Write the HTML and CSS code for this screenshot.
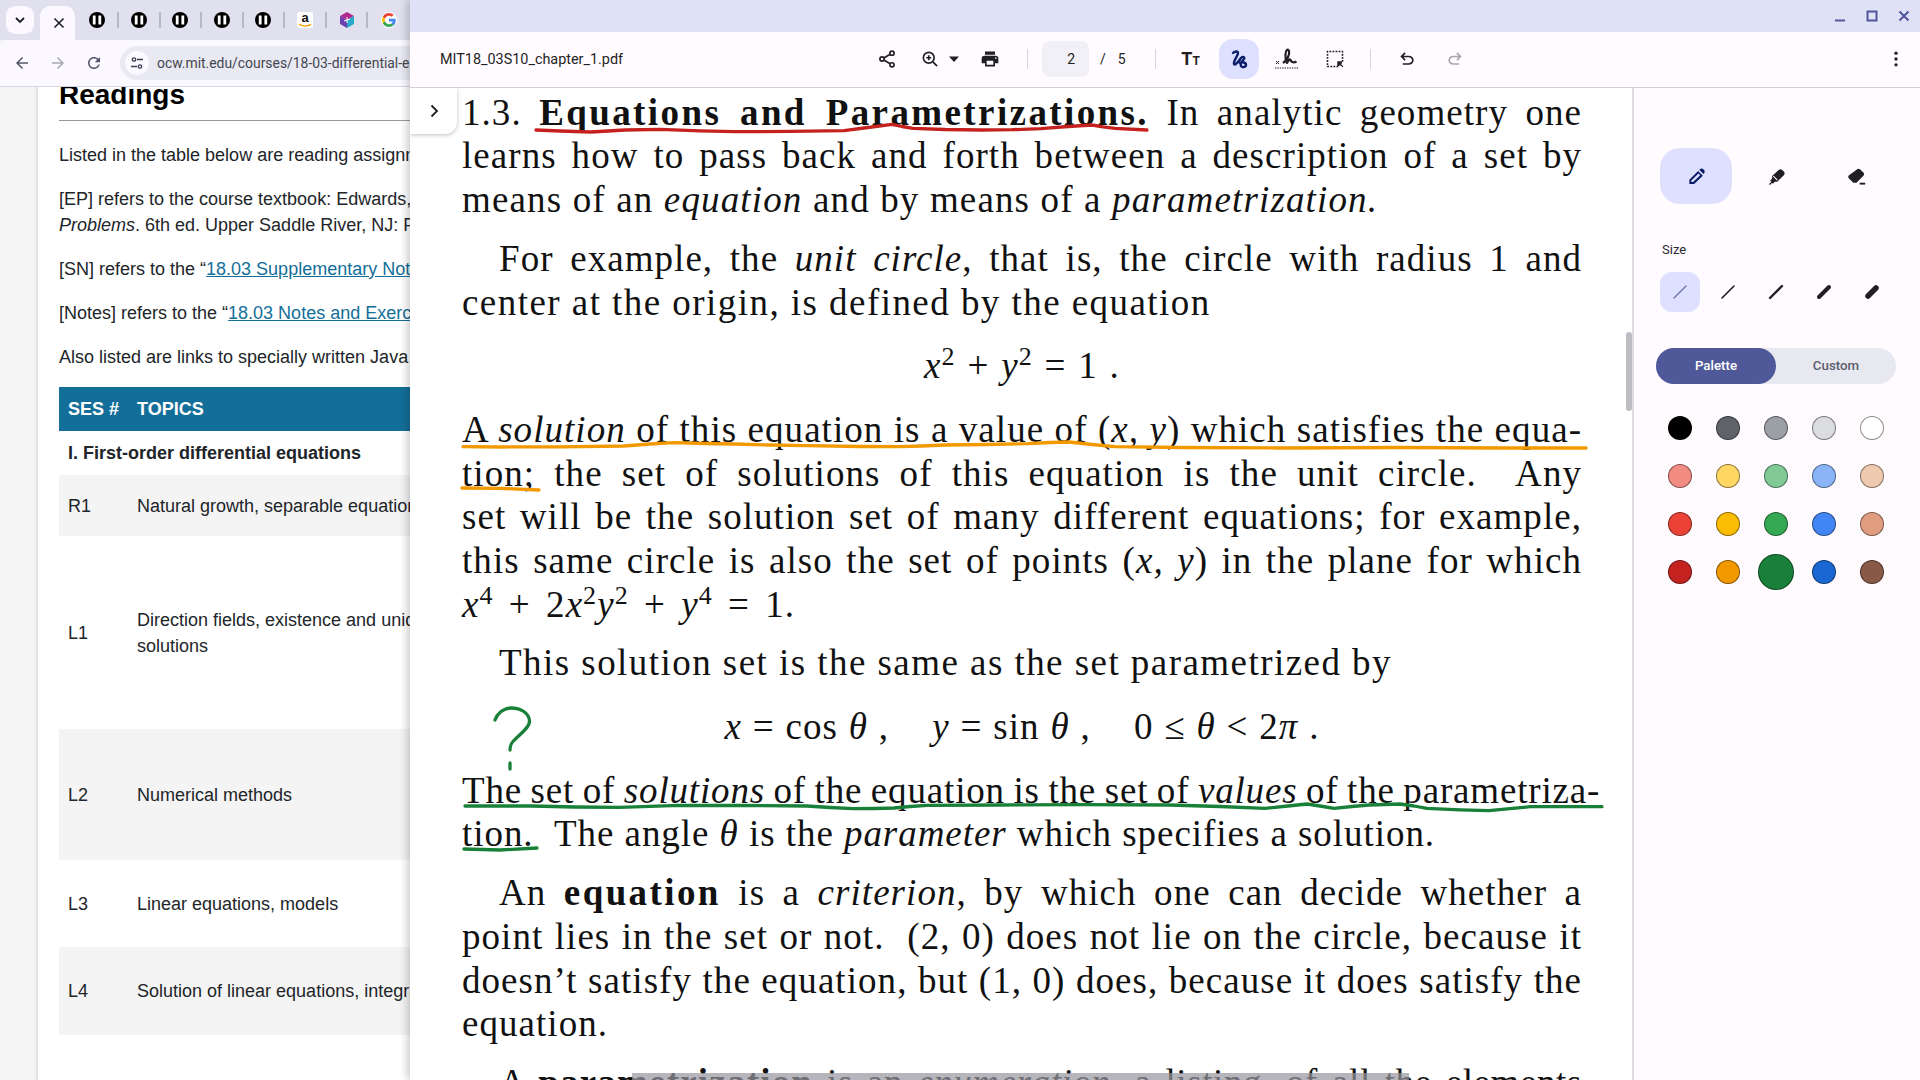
FILE: index.html
```html
<!DOCTYPE html>
<html lang="en">
  <head>
    <meta charset="UTF-8" />
    <title>MIT18_03S10_chapter_1.pdf</title>
    <link rel="stylesheet" href="styles.css">
  </head>
  <body>
    <div class="desktop">
      <!-- Browser window behind the PDF viewer -->
      <div class="browser">
        <div class="tabstrip">
          <div class="tab-search"><svg width="14" height="14" viewBox="0 0 14 14"><path d="M3 5l4 4 4-4" fill="none" stroke="#1f1f2a" stroke-width="1.8"/></svg></div>
          <div class="tab-active"><svg width="12" height="12" viewBox="0 0 12 12"><path d="M1.5 1.5l9 9M10.5 1.5l-9 9" stroke="#1f1f2a" stroke-width="1.6"/></svg></div>
          <div class="pinned"><svg class="ocw" viewBox="0 0 16 16"><circle cx="8" cy="8" r="8" fill="#000"/><path d="M5.200 3.500v9M10.800 3.500v9" stroke="#fff" stroke-width="2.800"/></svg></div>
          <div class="pinned"><svg class="ocw" viewBox="0 0 16 16"><circle cx="8" cy="8" r="8" fill="#000"/><path d="M5.200 3.500v9M10.800 3.500v9" stroke="#fff" stroke-width="2.800"/></svg></div>
          <div class="pinned"><svg class="ocw" viewBox="0 0 16 16"><circle cx="8" cy="8" r="8" fill="#000"/><path d="M5.200 3.500v9M10.800 3.500v9" stroke="#fff" stroke-width="2.800"/></svg></div>
          <div class="pinned"><svg class="ocw" viewBox="0 0 16 16"><circle cx="8" cy="8" r="8" fill="#000"/><path d="M5.200 3.500v9M10.800 3.500v9" stroke="#fff" stroke-width="2.800"/></svg></div>
          <div class="pinned"><svg class="ocw" viewBox="0 0 16 16"><circle cx="8" cy="8" r="8" fill="#000"/><path d="M5.200 3.500v9M10.800 3.500v9" stroke="#fff" stroke-width="2.800"/></svg></div>
          <div class="pinned"><span class="amazon">a<svg width="14" height="5" viewBox="0 0 14 5"><path d="M1 1c3 2.6 8 2.6 12 .4" fill="none" stroke="#f90" stroke-width="1.5"/></svg></span></div>
          <div class="pinned"><svg width="16" height="16" viewBox="0 0 16 16"><path d="M8 0l7 4-7 4-7-4z" fill="#b0278f"/><path d="M1 4l7 4v8l-7-4z" fill="#6a3fb0"/><path d="M15 4l-7 4v8l7-4z" fill="#2aa7c9"/><path d="M8 5v6M5 9l6-2" stroke="#fff" stroke-width="1"/></svg></div>
          <div class="pinned last"><span class="g-wrap"><svg width="14" height="14" viewBox="0 0 48 48"><path fill="#EA4335" d="M24 9.500c3.500 0 6.700 1.200 9.200 3.600l6.900-6.900C35.900 2.400 30.500 0 24 0 14.600 0 6.500 5.400 2.600 13.200l8 6.200C12.500 13.700 17.800 9.500 24 9.500z"/><path fill="#4285F4" d="M47 24.500c0-1.600-.2-3.100-.4-4.500H24v9h12.900c-.6 3-2.200 5.500-4.800 7.200l7.700 6c4.500-4.200 7.200-10.300 7.200-17.700z"/><path fill="#FBBC05" d="M10.500 28.600c-.5-1.400-.8-3-.8-4.600s.3-3.200.8-4.600l-8-6.200C.9 16.500 0 20.100 0 24s.9 7.500 2.600 10.800l7.900-6.200z"/><path fill="#34A853" d="M24 48c6.500 0 11.900-2.100 15.900-5.800l-7.700-6c-2.100 1.400-4.900 2.300-8.200 2.300-6.200 0-11.500-4.200-13.500-9.900l-7.900 6.200C6.500 42.600 14.600 48 24 48z"/></svg></span></div>
        </div>
        <div class="addressbar">
          <svg class="nav-icon" viewBox="0 0 24 24"><path fill="#53566a" d="M20 11H7.830l5.590-5.590L12 4l-8 8 8 8 1.410-1.410L7.830 13H20v-2z"/></svg>
          <svg class="nav-icon" viewBox="0 0 24 24"><path fill="#a9a9b6" d="M4 11h12.170l-5.590-5.590L12 4l8 8-8 8-1.410-1.410L16.170 13H4v-2z"/></svg>
          <svg class="nav-icon" viewBox="0 0 24 24"><path fill="#53566a" d="M17.650 6.350C16.200 4.900 14.210 4 12 4c-4.420 0-7.990 3.580-7.990 8s3.570 8 7.990 8c3.730 0 6.840-2.550 7.730-6h-2.080c-.82 2.330-3.040 4-5.650 4-3.310 0-6-2.690-6-6s2.690-6 6-6c1.660 0 3.140.69 4.220 1.780L13 11h7V4l-2.350 2.350z"/></svg>
          <div class="omnibox">
            <span class="site-info"><svg width="14" height="14" viewBox="0 0 14 14"><g fill="none" stroke="#3c3f50" stroke-width="1.300"><circle cx="4" cy="3.500" r="1.700"/><path d="M7 3.500h6M1 10.500h6"/><circle cx="10" cy="10.500" r="1.700"/></g></svg></span>
            <span class="url">ocw.mit.edu/courses/18-03-differential-equations-spring-2010</span>
          </div>
        </div>
        <div class="site">
          <div class="site-card">
            <h1>Readings</h1>
            <p>Listed in the table below are reading assignments for each session.</p>
            <p>[EP] refers to the course textbook: Edwards, C., and D. Penney.<br><em>Problems</em>. 6th ed. Upper Saddle River, NJ: Prentice Hall</p>
            <p>[SN] refers to the “<a href="#">18.03 Supplementary Notes</a>”</p>
            <p>[Notes] refers to the “<a href="#">18.03 Notes and Exercises</a>”</p>
            <p>Also listed are links to specially written Java applets</p>
            <table>
              <thead>
                <tr><th class="ses">SES #</th><th>TOPICS</th></tr>
              </thead>
              <tbody>
                <tr class="group"><td colspan="2">I. First-order differential equations</td></tr>
                <tr class="shade r-61"><td>R1</td><td>Natural growth, separable equations</td></tr>
                <tr class="r-193"><td>L1</td><td>Direction fields, existence and uniqueness of<br>solutions</td></tr>
                <tr class="shade r-131"><td>L2</td><td>Numerical methods</td></tr>
                <tr class="r-87"><td>L3</td><td>Linear equations, models</td></tr>
                <tr class="shade r-88"><td>L4</td><td>Solution of linear equations, integrating factors</td></tr>
              </tbody>
            </table>
          </div>
        </div>
      </div>

      <!-- PDF viewer window -->
      <div class="viewer">
        <div class="titlebar">
          <span class="win-btn"><svg width="12" height="12" viewBox="0 0 12 12"><path d="M1 10.500h10" stroke="#4f5898" stroke-width="2"/></svg></span>
          <span class="win-btn"><svg width="12" height="12" viewBox="0 0 12 12"><rect x="1.500" y="1.500" width="9" height="9" fill="none" stroke="#4f5898" stroke-width="2"/></svg></span>
          <span class="win-btn"><svg width="12" height="12" viewBox="0 0 12 12"><path d="M1.500 1.500l9 9M10.500 1.500l-9 9" stroke="#4f5898" stroke-width="2"/></svg></span>
        </div>
        <div class="toolbar">
          <div class="filename">MIT18_03S10_chapter_1.pdf</div>
          <button class="tool"><svg viewBox="0 0 24 24"><g fill="none" stroke="#1f1f24" stroke-width="2"><circle cx="18" cy="5" r="2.500"/><circle cx="6" cy="12" r="2.500"/><circle cx="18" cy="19" r="2.500"/><path d="M8.200 10.800l7.600-4.500M8.200 13.200l7.600 4.500"/></g></svg></button>
          <button class="tool zoom-tool"><svg viewBox="0 0 24 24"><g fill="none" stroke="#1f1f24" stroke-width="2"><circle cx="10.500" cy="10.500" r="6.500"/><path d="M15.500 15.500l5 5M10.500 7.500v6M7.500 10.500h6"/></g></svg><svg class="caret" viewBox="0 0 12 12"><path d="M1 3.500h10l-5 5.500z" fill="#1f1f24"/></svg></button>
          <button class="tool"><svg viewBox="0 0 24 24"><path fill="#1f1f24" d="M19 8H5c-1.660 0-3 1.340-3 3v6h4v4h12v-4h4v-6c0-1.660-1.340-3-3-3zm-3 11H8v-5h8v5zm3-7c-.55 0-1-.45-1-1s.45-1 1-1 1 .45 1 1-.45 1-1 1zm-1-9H6v4h12V3z"/></svg></button>
          <span class="sep"></span>
          <div class="page-box">2</div>
          <span class="page-slash">/</span>
          <span class="page-total">5</span>
          <span class="sep"></span>
          <button class="tool tt"><span class="tt-big">T</span><span class="tt-small">T</span></button>
          <button class="tool tool-on"><svg class="ink-icon" viewBox="0 0 24 24"><path d="M6 6c2-2 5-2 5 0 0 3-5 8-4 11 1 2 5-3 7-6 2-2 4-1 3 1-2 2-4 5-3 7 1 2 5 1 5-1 0-3-4-3-6-2" fill="none" stroke="#0c1c6a" stroke-width="2.400" stroke-linecap="round" stroke-linejoin="round"/></svg></button>
          <button class="tool"><svg class="sign-icon" viewBox="0 0 24 24"><path d="M8 16c4-3 7-8 6-12-1-3-3.500-1-3.500 3.500 0 4 0 8.500 1.500 8.500 2-3.500 2.500-4.500 3.500-3 1 2.500 3.500 3 6 1.500" fill="none" stroke="#1f1f24" stroke-width="2.200"/><path d="M1 14l3 3M4 14l-3 3" stroke="#1f1f24"/><path d="M0 21h24" stroke="#1f1f24" stroke-width="1.200" stroke-dasharray="1.400 1"/></svg></button>
          <button class="tool select-tool"><svg viewBox="0 0 24 24"><path d="M16 21H3V3h18v13" fill="none" stroke="#1f1f24" stroke-width="1.900" stroke-dasharray="2.200 1.500"/><path d="M21.500 21.500l-3.500-3.500M15.500 15.500h4v1.500h-2.500v2.500h-1.500z" stroke="#1f1f24" stroke-width="1.500"/></svg></button>
          <span class="sep sep-tight"></span>
          <button class="tool"><svg viewBox="0 0 24 24"><path fill="#1f1f24" d="M7 19v-2h7.100q1.575 0 2.738-1T18 13.500q0-1.500-1.163-2.500T14.100 10H7.800l2.600 2.600L9 14 4 9l5-5 1.400 1.400L7.800 8h6.300q2.425 0 4.163 1.575T20 13.500q0 2.350-1.737 3.925T14.100 19H7z"/></svg></button>
          <button class="tool"><svg viewBox="0 0 24 24"><path fill="#a8a8ac" transform="matrix(-1 0 0 1 24 0)" d="M7 19v-2h7.100q1.575 0 2.738-1T18 13.500q0-1.500-1.163-2.500T14.100 10H7.800l2.600 2.600L9 14 4 9l5-5 1.400 1.400L7.800 8h6.300q2.425 0 4.163 1.575T20 13.500q0 2.350-1.737 3.925T14.100 19H7z"/></svg></button>
          <button class="tool more"><svg viewBox="0 0 24 24"><g fill="#1f1f24"><circle cx="12" cy="5" r="2"/><circle cx="12" cy="12" r="2"/><circle cx="12" cy="19" r="2"/></g></svg></button>
        </div>
        <div class="doc">
          <div class="doc-view">
            <div class="line"><span>1.3.</span> <b>Equations and Parametrizations.</b> In analytic geometry one</div>
            <div class="line">learns how to pass back and forth between a description of a set by</div>
            <div class="line open ls-mid">means of an <i>equation</i> and by means of a <i>parametrization.</i></div>
            <div class="line indent gap-15">For example, the <i>unit circle</i>, that is, the circle with radius 1 and</div>
            <div class="line open ls-wide">center at the origin, is defined by the equation</div>
            <div class="line formula gap-20 formula-1"><i>x</i><sup>2</sup> + <i>y</i><sup>2</sup> = 1 .</div>
            <div class="line gap-20"><span>A <i>solution</i> of this equation is a value of (<i>x, y</i>) which satisfies the equa-</span></div>
            <div class="line">tion; the set of solutions of this equation is the unit circle. &nbsp;Any</div>
            <div class="line">set will be the solution set of many different equations; for example,</div>
            <div class="line">this same circle is also the set of points (<i>x, y</i>) in the plane for which</div>
            <div class="line open math-line"><i>x</i><sup>4</sup> + 2<i>x</i><sup>2</sup><i>y</i><sup>2</sup> + <i>y</i><sup>4</sup> = 1.</div>
            <div class="line indent open gap-14 ls-wide">This solution set is the same as the set parametrized by</div>
            <div class="line formula gap-20 formula-2"><i>x</i> = cos <i>θ</i> , &nbsp; &nbsp;<i>y</i> = sin <i>θ</i> , &nbsp; &nbsp;0 ≤ <i>θ</i> &lt; 2<i>π</i> .</div>
            <div class="line gap-20 wide-line">The set of <i>solutions</i> of the equation is the set of <i>values</i> of the parametriza-</div>
            <div class="line open ls-tight">tion. &nbsp;The angle <i>θ</i> is the <i>parameter</i> which specifies a solution.</div>
            <div class="line indent gap-15">An <b>equation</b> is a <i>criterion</i>, by which one can decide whether a</div>
            <div class="line">point lies in the set or not. &nbsp;(2, 0) does not lie on the circle, because it</div>
            <div class="line">doesn’t satisfy the equation, but (1, 0) does, because it does satisfy the</div>
            <div class="line open">equation.</div>
            <div class="line indent gap-15 last-line">A <b>parametrization</b> is an <i>enumeration</i>, a listing, of all the elements</div>
          </div>
          <div class="side-panel">
            <div class="pen-row">
              <button class="pen pen-on"><svg viewBox="0 0 24 24"><path fill="#0c1c6a" d="M3 21.500v-5.500L14 5l6 6-11 10.500zm2.500-4.500v2h2.200l9-8.600-2.200-2.200zM15.500 3.500l.8-.8c1.200-1.200 3-1.200 4.200 0l1 1c1.200 1.200 1.200 3 0 4.200l-.8.800z"/></svg></button>
              <button class="pen"><svg viewBox="0 0 24 24"><path fill="#1f1f24" d="M2 22l3.500-3.500-1.500-1.500 2.500-2.500v-3L15 3.500c1.300-1 2.800-1 4 0l2.500 2.500c1 1.200 1 2.700 0 4L13 18.500h-3L7.500 21 6 20l-1 2z"/><path d="M8 11.500l5 5" stroke="#fffbff" stroke-width="1.400"/></svg></button>
              <button class="pen"><svg viewBox="0 0 24 24"><path fill="#1f1f24" d="M12.500 3c1.200-1.200 3-1.200 4.200 0l4 4c1.200 1.200 1.200 3 0 4.200L12 20H8l-5.500-5.500c-1.200-1.200-1.200-3 0-4.200z"/><path d="M16 21h7" stroke="#1f1f24" stroke-width="2.400"/></svg></button>
            </div>
            <div class="size-label">Size</div>
            <div class="size-row">
              <span class="size size-on"><svg viewBox="0 0 16 16"><path d="M2 14L14 2" stroke="#6c70a4" stroke-width="1.200" stroke-linecap="round"/></svg></span>
              <span class="size"><svg viewBox="0 0 16 16"><path d="M2 14L14 2" stroke="#1f1f24" stroke-width="1.600" stroke-linecap="round"/></svg></span>
              <span class="size"><svg viewBox="0 0 16 16"><path d="M2 14L14 2" stroke="#1f1f24" stroke-width="2.400" stroke-linecap="round"/></svg></span>
              <span class="size"><svg viewBox="0 0 16 16"><path d="M3 13L13 3" stroke="#1f1f24" stroke-width="4" stroke-linecap="round"/></svg></span>
              <span class="size"><svg viewBox="0 0 16 16"><path d="M4 12L12 4" stroke="#1f1f24" stroke-width="5.500" stroke-linecap="round"/></svg></span>
            </div>
            <div class="segmented">
              <span class="seg seg-on">Palette</span>
              <span class="seg">Custom</span>
            </div>
            <div class="swatches">
              <span class="dot c-black"></span><span class="dot c-gr1"></span><span class="dot c-gr2"></span><span class="dot c-gr3"></span><span class="dot c-white"></span>
              <span class="dot c-red1"></span><span class="dot c-yel1"></span><span class="dot c-grn1"></span><span class="dot c-blu1"></span><span class="dot c-tan1"></span>
              <span class="dot c-red2"></span><span class="dot c-yel2"></span><span class="dot c-grn2"></span><span class="dot c-blu2"></span><span class="dot c-tan2"></span>
              <span class="dot c-red3"></span><span class="dot c-yel3"></span><span class="dot c-grn3 dot-picked"></span><span class="dot c-blu3"></span><span class="dot c-tan3"></span>
            </div>
          </div>
          <div class="vthumb"></div>
          <div class="hthumb"></div>
          <div class="side-toggle"><svg width="14" height="14" viewBox="0 0 14 14"><path d="M4.500 1.500L10 7l-5.500 5.500" fill="none" stroke="#1f1f24" stroke-width="1.800"/></svg></div>
        </div>
        <!-- Ink annotations, drawn in screen coordinates -->
        <svg class="ink" viewBox="410 0 1510 1080">
          <g fill="none" stroke-width="3.300" stroke-linecap="round" stroke-linejoin="round">
            <polyline stroke="#c5221f" points="536,130 560,131 591,132 625,130 660,129.300 700,130.800 734,131.700 790,131.400 844,130.700 868,127.500 892,124.300 902,126.500 913,128.300 945,129.500 982,130 1012,129.700 1041,128.700 1068,126.500 1092,125 1103,126.800 1115,128.300 1147,130"/>
            <polyline stroke="#f29900" points="463,446.700 500,447 560,446.800 624,446 650,444 674,442.700 705,443.500 734,444 770,445 807,445.700 860,446.500 899,446.700 922,446 945,445 985,444.500 1028,443.700 1050,442.500 1069,442 1092,444.500 1115,446.700 1180,447.500 1280,448 1400,447.500 1500,448 1586,448"/>
            <polyline stroke="#f29900" points="462,488 500,488.300 539,490"/>
            <polyline stroke="#188038" points="465,806 532,806 575,807 619,807.300 650,806.300 679,805.300 740,805.500 807,806 830,807.500 853,808.700 875,808.500 894,808 910,806.500 927,805.300 1000,805 1083,804.700 1169,805 1220,806.500 1265,808.300 1288,806 1307,804 1320,806 1334,808.300 1352,806.500 1369,805 1400,804 1414,806 1427,808.300 1460,809.800 1489,810.700 1510,808.700 1530,806.700 1566,806.700 1602,806.700"/>
            <polyline stroke="#188038" points="464,849 500,850 537,848"/>
            <path stroke="#188038" d="M495 720c2-6 8-12 16-12 10 0 18 5 18.500 13 .5 6-8 12-14 18-5 4-5.500 7-5.500 11"/>
            <path stroke="#188038" d="M510 763v6"/>
          </g>
        </svg>
      </div>
    </div>
  </body>
</html>
```

FILE: styles.css
```css
/* General */
body {
  margin: 0;
  font-family: "Liberation Sans", Arial, sans-serif;
  background: #000;
}

button {
  border: none;
  background: none;
  padding: 0;
}

.desktop {
  position: relative;
  width: 1920px;
  height: 1080px;
  overflow: hidden;
}

/* Browser window */
.browser {
  position: absolute;
  left: 0;
  top: 0;
  width: 410px;
  height: 1080px;
  overflow: hidden;
  display: flex;
  flex-direction: column;
  background: #f5f5f5;
}

.tabstrip {
  height: 40px;
  background: #e0e0ee;
  display: flex;
  flex-shrink: 0;
  padding-left: 6px;
  box-sizing: border-box;
}

.tab-search {
  width: 28px;
  height: 28px;
  margin-top: 6px;
  background: #fbf8ff;
  border-radius: 9px;
  display: flex;
  align-items: center;
  justify-content: center;
}

.tab-active {
  width: 36px;
  height: 34px;
  margin: 6px 2px 0 6px;
  padding-left: 2px;
  box-sizing: border-box;
  background: #fbf8ff;
  border-radius: 10px 10px 0 0;
  display: flex;
  align-items: center;
  justify-content: center;
}

.pinned {
  width: 42px;
  height: 16px;
  margin-top: 12px;
  display: flex;
  align-items: center;
  justify-content: center;
  border-right: 2px solid #b9b9c5;
  box-sizing: border-box;
}

.pinned.last {
  border-right: none;
}

.ocw {
  width: 16px;
  height: 16px;
}

.amazon {
  width: 16px;
  height: 16px;
  background: #fff;
  border-radius: 2px;
  font-size: 13px;
  font-weight: bold;
  line-height: 12px;
  text-align: center;
  color: #111;
  display: flex;
  flex-direction: column;
  align-items: center;
}

.amazon svg {
  margin-top: -1px;
}

.g-wrap {
  width: 16px;
  height: 16px;
  background: #fff;
  border-radius: 50%;
  display: flex;
  align-items: center;
  justify-content: center;
}

.addressbar {
  height: 47px;
  flex-shrink: 0;
  background: #fbf8ff;
  border-bottom: 1px solid #d6d6e0;
  box-sizing: border-box;
  border-radius: 8px 0 0 0;
  display: flex;
  align-items: center;
  padding-left: 13px;
  gap: 18px;
}

.nav-icon {
  width: 18px;
  height: 18px;
  flex-shrink: 0;
}

.omnibox {
  flex: 1;
  height: 34px;
  margin-left: -1px;
  background: #e9e9f3;
  border-radius: 17px 0 0 17px;
  display: flex;
  align-items: center;
  padding-left: 5px;
  overflow: hidden;
  white-space: nowrap;
}

.site-info {
  width: 24px;
  height: 24px;
  background: #fbf8ff;
  border-radius: 50%;
  display: flex;
  align-items: center;
  justify-content: center;
  flex-shrink: 0;
}

.url {
  font-family: Roboto, sans-serif;
  font-size: 13.900px;
  color: #44464f;
  margin-left: 8px;
}

.site {
  flex: 1;
  overflow: hidden;
  padding-left: 38px;
}

.site-card {
  background: #fff;
  height: 110%;
  padding-left: 21px;
  width: 1000px;
  box-shadow: 0 0 5px rgba(0, 0, 0, 0.2);
  color: #212529;
  font-size: 18px;
  line-height: 26px;
  white-space: nowrap;
}

.site-card h1 {
  margin: -10px 0 21px;
  font-size: 28px;
  line-height: 36px;
  color: #000;
  border-bottom: 1px solid #999;
  height: 43px;
  width: 900px;
}

.site-card p {
  margin: 18px 0 0;
}

.site-card a {
  color: #136f99;
}

.site-card table {
  margin-top: 17px;
  width: 900px;
  table-layout: fixed;
  border-collapse: collapse;
}

.site-card th,
.site-card td {
  padding: 0 0 0 9px;
  text-align: left;
}

.site-card th {
  background: #136f99;
  color: #fff;
  height: 44px;
  text-transform: uppercase;
}

.ses {
  width: 60px;
}

.group td {
  font-weight: bold;
  height: 44px;
}

.shade {
  background: #f4f4f4;
}

.r-61 {
  height: 61px;
}

.r-193 {
  height: 193px;
}

.r-131 {
  height: 131px;
}

.r-87 {
  height: 87px;
}

.r-88 {
  height: 88px;
}

/* PDF viewer */
.viewer {
  position: absolute;
  left: 410px;
  top: 0;
  width: 1510px;
  height: 1080px;
  display: flex;
  flex-direction: column;
  background: #fff;
  box-shadow: -3px 0 8px rgba(0, 0, 0, 0.2);
}

.titlebar {
  height: 32px;
  flex-shrink: 0;
  background: #dfe1f7;
  display: flex;
  justify-content: flex-end;
}

.win-btn {
  width: 32px;
  display: flex;
  align-items: center;
  justify-content: center;
  padding-bottom: 1px;
}

.toolbar {
  height: 56px;
  flex-shrink: 0;
  box-sizing: border-box;
  background: #fffbff;
  border-bottom: 1px solid #cfcfd4;
  display: flex;
  align-items: center;
  padding-bottom: 1px;
}

.filename {
  font-family: Roboto, sans-serif;
  font-size: 14.400px;
  color: #1f1f24;
  width: 423px;
  padding-left: 30px;
}

.tool {
  width: 48px;
  height: 40px;
  display: flex;
  align-items: center;
  justify-content: center;
}

.tool svg {
  width: 20px;
  height: 20px;
}

.tool .ink-icon,
.tool .sign-icon {
  width: 24px;
  height: 24px;
}

.zoom-tool {
  width: 55px;
  justify-content: flex-start;
  padding-left: 9px;
  box-sizing: border-box;
  gap: 8px;
}

.tool .caret {
  width: 12px;
  height: 12px;
}

.select-tool {
  margin-right: -1px;
}

.sep {
  width: 1px;
  height: 20px;
  background: #d5d5da;
  margin-left: 13px;
}

.sep-tight {
  margin: 0 12px;
}

.page-box {
  width: 47px;
  height: 36px;
  margin-left: 14px;
  background: #f1f0f7;
  border-radius: 8px;
  font-family: Roboto, sans-serif;
  font-size: 14px;
  line-height: 36px;
  text-align: right;
  box-sizing: border-box;
  padding-right: 14px;
  color: #1f1f24;
}

.page-slash,
.page-total {
  font-family: Roboto, sans-serif;
  font-size: 14px;
  color: #1f1f24;
}

.page-slash {
  margin-left: 11px;
}

.page-total {
  margin-left: 12px;
}

.page-total + .sep {
  margin-left: 29px;
}

.tt {
  margin-left: 11px;
  font-family: Roboto, sans-serif;
  font-weight: bold;
  color: #1f1f24;
  align-items: baseline;
  line-height: 40px;
}

.tt-big {
  font-size: 18px;
}

.tt-small {
  font-size: 12px;
}

.tool-on {
  width: 40px;
  margin: 0 4px;
  background: #dde1ff;
  border-radius: 14px;
}

.more {
  margin-left: auto;
}

.doc {
  flex: 1;
  display: flex;
  position: relative;
  overflow: hidden;
}

.doc-view {
  width: 1222px;
  flex-shrink: 0;
  box-sizing: border-box;
  padding: 2.500px 50px 0 52px;
  background: #fff;
  font-family: "Liberation Serif", "Times New Roman", serif;
  font-size: 37px;
  letter-spacing: 1.050px;
  color: #111;
}

.doc-view b {
  letter-spacing: 2.400px;
}

.line {
  height: 43.700px;
  line-height: 43.700px;
  text-align: justify;
  text-align-last: justify;
}

.line sup {
  font-size: 26px;
  line-height: 0;
}

.open {
  text-align-last: left;
}

.ls-mid {
  letter-spacing: 1.150px;
}

.ls-wide {
  letter-spacing: 1.450px;
}

.ls-tight {
  letter-spacing: 0.950px;
}

.indent {
  padding-left: 37px;
}

.gap-14 {
  margin-top: 15px;
}

.gap-15 {
  margin-top: 15.300px;
}

.gap-20 {
  margin-top: 20px;
}

.formula {
  text-align: center;
  text-align-last: center;
}

.formula-1 {
  word-spacing: 1.500px;
}

.formula-2 {
  word-spacing: 0.500px;
}

.math-line {
  word-spacing: 5px;
}

.wide-line {
  white-space: nowrap;
  text-align-last: left;
  letter-spacing: 0.830px;
  word-spacing: -1.500px;
}

.last-line {
  letter-spacing: 0.600px;
}

.doc-view .last-line b {
  letter-spacing: 1.200px;
}

/* Annotation panel */
.side-panel {
  flex: 1;
  background: #fffbff;
  border-left: 2px solid #dcdce0;
  box-sizing: border-box;
  padding-left: 24px;
}

.pen-row {
  display: flex;
  gap: 8px;
  margin-top: 60px;
  margin-left: 2px;
}

.pen {
  width: 72px;
  height: 56px;
  display: flex;
  align-items: center;
  justify-content: center;
  border-radius: 20px;
}

.pen svg {
  width: 19px;
  height: 19px;
}

.pen-on {
  background: #dde1ff;
}

.size-label {
  margin: 37px 0 0 4px;
  font-family: Roboto, sans-serif;
  font-size: 13px;
  line-height: 18px;
  color: #2b2b30;
}

.size-row {
  display: flex;
  gap: 8px;
  margin: 13px 0 0 2px;
}

.size {
  width: 40px;
  height: 40px;
  display: flex;
  align-items: center;
  justify-content: center;
  border-radius: 12px;
}

.size svg {
  width: 16px;
  height: 16px;
}

.size-on {
  background: #dde1ff;
}

.segmented {
  width: 240px;
  height: 36px;
  margin: 36px 0 0 -2px;
  display: flex;
  background: #e8e8f0;
  border-radius: 18px;
}

.seg {
  width: 120px;
  line-height: 36px;
  text-align: center;
  font-family: Roboto, sans-serif;
  font-size: 13.300px;
  font-weight: 500;
  color: #5a5c6e;
}

.seg-on {
  background: #4f5898;
  color: #fff;
  border-radius: 18px;
}

.swatches {
  display: grid;
  grid-template-columns: repeat(5, 48px);
  grid-auto-rows: 48px;
  margin: 20px 0 0 -2px;
  align-items: center;
  justify-items: center;
}

.dot {
  width: 24px;
  height: 24px;
  border-radius: 50%;
  box-sizing: border-box;
  border: 1px solid rgba(0, 0, 0, 0.45);
}

.dot-picked {
  width: 36px;
  height: 36px;
}

.c-black { background: #000; }
.c-gr1 { background: #5f6368; }
.c-gr2 { background: #9aa0a6; }
.c-gr3 { background: #dadce0; }
.c-white { background: #fff; }
.c-red1 { background: #f28b82; }
.c-yel1 { background: #fdd663; }
.c-grn1 { background: #81c995; }
.c-blu1 { background: #8ab4f8; }
.c-tan1 { background: #eec9ae; }
.c-red2 { background: #ea4335; }
.c-yel2 { background: #fbbc04; }
.c-grn2 { background: #34a853; }
.c-blu2 { background: #4285f4; }
.c-tan2 { background: #e19d80; }
.c-red3 { background: #c5221f; }
.c-yel3 { background: #f29900; }
.c-grn3 { background: #188038; }
.c-blu3 { background: #1967d2; }
.c-tan3 { background: #885945; }

/* Overlays */
.side-toggle {
  position: absolute;
  left: 0;
  top: 0;
  width: 47px;
  height: 46px;
  background: #fff;
  border-radius: 0 0 12px 0;
  box-shadow: 0 1px 4px rgba(0, 0, 0, 0.25);
  display: flex;
  align-items: center;
  justify-content: center;
}

.vthumb {
  position: absolute;
  left: 1216px;
  top: 244px;
  width: 6px;
  height: 79px;
  border-radius: 3px;
  background: #bcbcc2;
}

.hthumb {
  position: absolute;
  left: 222px;
  bottom: 0;
  width: 777px;
  height: 7px;
  background: rgba(150, 150, 158, 0.7);
}

.ink {
  position: absolute;
  left: 0;
  top: 0;
  width: 1510px;
  height: 1080px;
  pointer-events: none;
}
```
